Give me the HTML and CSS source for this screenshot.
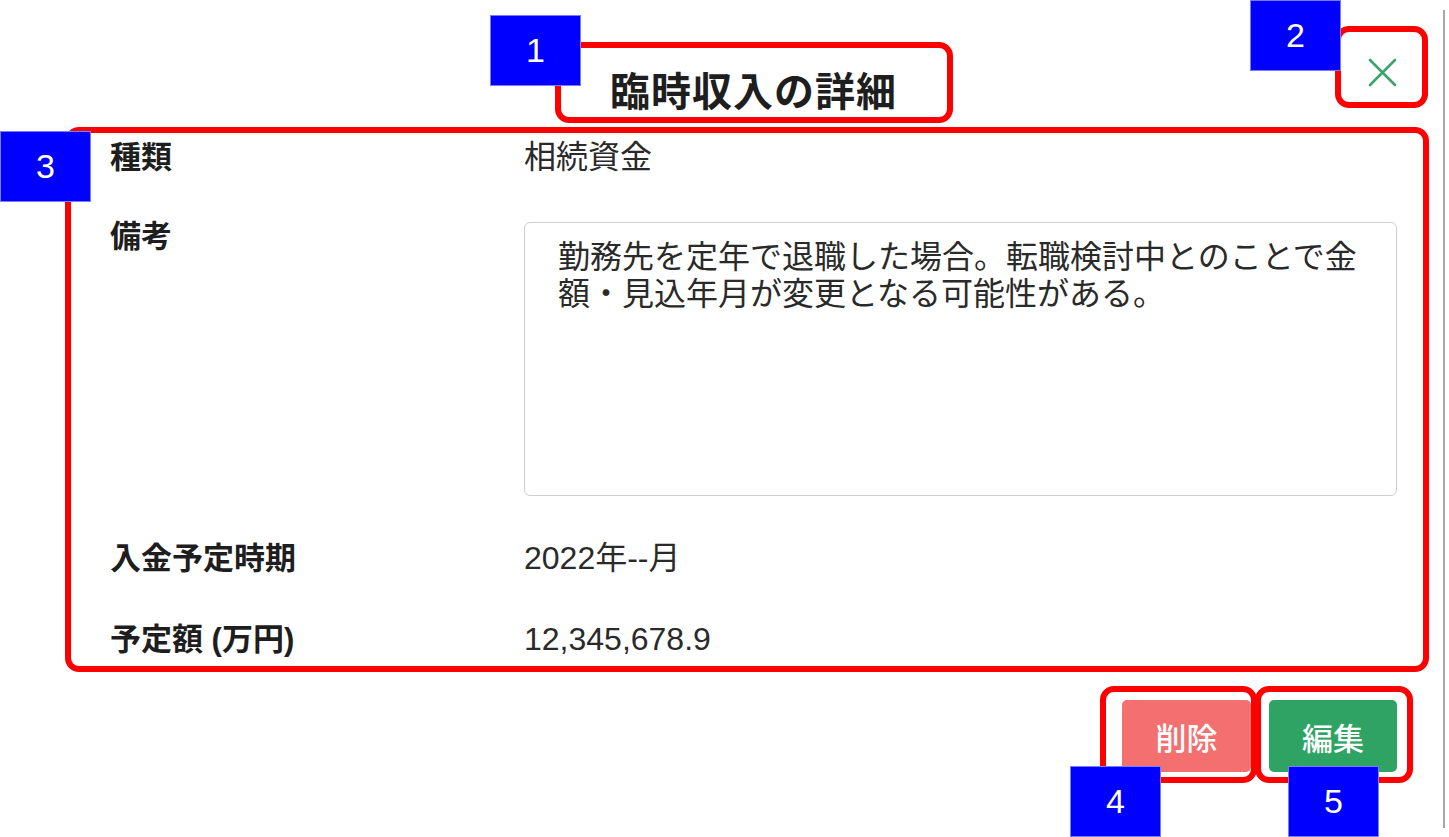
FILE: index.html
```html
<!DOCTYPE html>
<html lang="ja">
<head>
<meta charset="utf-8">
<title>臨時収入の詳細</title>
<link rel="stylesheet" href="styles.css">
</head>
<body>
<div class="modal">
  <div class="modal-header">
    <div class="spacer"></div>
    <h1 class="modal-title">臨時収入の詳細</h1>
    <button class="close-btn" aria-label="閉じる">
      <svg width="29" height="29" viewBox="0 0 29 29"><path d="M2 2 L27 27 M27 2 L2 27" stroke="#3aa36e" stroke-width="2.6" fill="none" stroke-linecap="round"/></svg>
    </button>
  </div>
  <div class="detail-grid">
    <div class="label">種類</div>
    <div class="value">相続資金</div>
    <div class="label">備考</div>
    <div class="value"><div class="note">勤務先を定年で退職した場合。転職検討中とのことで金額・見込年月が変更となる可能性がある。</div></div>
    <div class="label">入金予定時期</div>
    <div class="value">2022年--月</div>
    <div class="label">予定額 (万円)</div>
    <div class="value">12,345,678.9</div>
  </div>
  <div class="modal-footer">
    <button class="btn btn-danger">削除</button>
    <button class="btn btn-primary">編集</button>
  </div>
</div>

<div class="anno-box box1"></div>
<div class="anno-box box2"></div>
<div class="anno-box box3"></div>
<div class="anno-box box4"></div>
<div class="anno-box box5"></div>
<div class="anno-tag tag1">1</div>
<div class="anno-tag tag2">2</div>
<div class="anno-tag tag3">3</div>
<div class="anno-tag tag4">4</div>
<div class="anno-tag tag5">5</div>
</body>
</html>
```
FILE: styles.css
```css
html, body {
  margin: 0;
  padding: 0;
  background: #ffffff;
}
body {
  width: 1449px;
  height: 837px;
  overflow: hidden;
  position: relative;
  font-family: "Liberation Sans", "Noto Sans CJK JP", sans-serif;
  color: #222;
}
.modal {
  box-sizing: border-box;
  margin-left: 61px;
  margin-top: 10px;
  width: 1384px;
  height: 818px;
  border-right: 2px solid #a8a8a8;
  padding: 48px 46px 0 49px;
}
.modal-header {
  display: grid;
  grid-template-columns: 1fr auto 1fr;
  align-items: start;
}
.modal-title {
  margin: 10px 0 0 0;
  font-size: 40px;
  line-height: 48px;
  font-weight: 700;
  color: #1e1e1e;
  letter-spacing: 1px;
}
.close-btn {
  justify-self: end;
  border: 0;
  background: transparent;
  padding: 0;
  width: 29px;
  height: 29px;
  margin-right: 0;
}
.close-btn svg { display: block; }
.detail-grid {
  margin-top: 23px;
  display: grid;
  grid-template-columns: 414px 1fr;
  row-gap: 44px;
  font-size: 32px;
  line-height: 37px;
  align-items: start;
}
.label {
  font-size: 31px;
  font-weight: 700;
  color: #1e1e1e;
}
.detail-grid .label:nth-of-type(3) { margin-top: -2px; }
.value {
  color: #2a2a2a;
}
.note {
  box-sizing: border-box;
  height: 274px;
  border: 1px solid #cfcfcf;
  border-radius: 6px;
  padding: 16px 30px 0 33px;
  margin-top: 2px;
  color: #2a2a2a;
}
.modal-footer {
  margin-top: 42px;
  display: flex;
  justify-content: flex-end;
  gap: 18px;
}
.btn {
  height: 72px;
  border: 0;
  border-radius: 5px;
  color: #ffffff;
  font-family: "Liberation Sans", "Noto Sans CJK JP", sans-serif;
  font-size: 31px;
  font-weight: 500;
  padding: 0;
}
.btn-danger {
  width: 129px;
  background: #f46f6f;
}
.btn-primary {
  width: 128px;
  background: #2ea364;
}

/* annotation overlays */
.anno-box {
  position: absolute;
  box-sizing: border-box;
  border: 6px solid #ff0000;
  border-radius: 14px;
}
.box1 { left: 555px; top: 42px; width: 398px; height: 81px; }
.box2 { left: 1335px; top: 26px; width: 93px; height: 82px; }
.box3 { left: 65px; top: 127px; width: 1364px; height: 545px; }
.box4 { left: 1100px; top: 686px; width: 157px; height: 97px; }
.box5 { left: 1255px; top: 686px; width: 158px; height: 97px; }
.anno-tag {
  position: absolute;
  box-sizing: border-box;
  width: 91px;
  height: 71px;
  background: #0000ff;
  border: 1px solid #7b7bff;
  color: #ffffff;
  font-family: "Liberation Sans", sans-serif;
  font-size: 34px;
  line-height: 69px;
  text-align: center;
}
.tag1 { left: 490px; top: 15px; }
.tag2 { left: 1250px; top: 0; }
.tag3 { left: 0; top: 131px; }
.tag4 { left: 1070px; top: 766px; }
.tag5 { left: 1288px; top: 766px; }
```
